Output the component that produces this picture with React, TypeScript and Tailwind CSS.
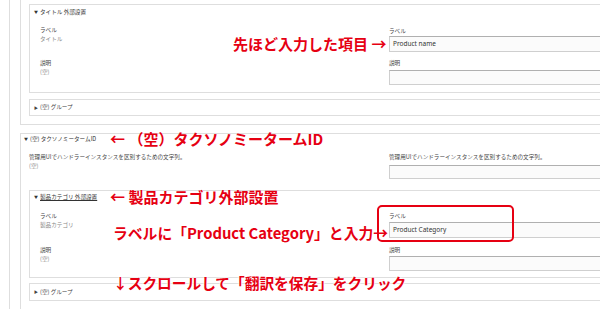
import React from "react";

const small = "text-[5.6px] leading-[9px]";
const annot =
  "absolute whitespace-nowrap font-bold leading-[15px] text-[#e60012] font-['Noto_Sans_CJK_JP',sans-serif]";

function Input({ h, value }: { h: string; value?: string }) {
  return (
    <div
      className={`${h} w-[320px] border border-[#cfcfcf] border-t-[#b0b0b0] bg-[#fbfbfb] flex items-center pl-[3px] text-[6.5px] text-[#333] font-['Noto_Sans',sans-serif]`}
    >
      {value}
    </div>
  );
}

export default function App() {
  return (
    <div className="relative w-[600px] h-[309px] overflow-hidden bg-white text-[#444] font-['Noto_Sans_CJK_JP','Noto_Sans',sans-serif]">
      <div className="ml-[9px] h-full border-l border-[#dedede] pl-[10px]">
        {/* Fieldset 1 */}
        <div className="w-[720px] border-l border-b border-r border-[#dedede] pl-[8px] pt-[4px] pb-[8px]">
          <div className="h-[89px] border border-[#dedede] pt-0">
            <div className={`h-[14px] leading-[14px] pl-[4px] text-[5.6px] text-[#333] flex items-center gap-[2px]`}>
              <span className="text-[4px]">▼</span>
              <span>タイトル 外部設置</span>
            </div>
            <div className="flex h-[33px]">
              <div className="w-[359px] pl-[10px] pt-[7px]">
                <div className={`${small} text-[#444]`}>ラベル</div>
                <div className={`${small} text-[#888]`}>タイトル</div>
              </div>
              <div className="pt-[8px]">
                <div className={`h-[9px] ${small} text-[#444]`}>ラベル</div>
                <Input h="h-[16px]" value="Product name" />
              </div>
            </div>
            <div className="flex h-[33px]">
              <div className="w-[359px] pl-[10px] pt-[7px]">
                <div className={`${small} text-[#444]`}>説明</div>
                <div className={`${small} text-[#888]`}>(空)</div>
              </div>
              <div className="pt-[7px]">
                <div className={`h-[11px] ${small} text-[#444]`}>説明</div>
                <Input h="h-[15px]" />
              </div>
            </div>
          </div>
          <div className="mt-[6px] h-[17px] border border-[#dedede] pl-[4px] flex items-center gap-[2px] text-[5.6px] text-[#444]">
            <span className="text-[4px]">▶</span>
            <span>(空) グループ</span>
          </div>
        </div>

        {/* Fieldset 2 */}
        <div className="mt-[8px] w-[720px] h-[200px] border-l border-t border-r border-[#dedede]">
          <div className="h-[10px] pl-[3px] flex items-center gap-[2px] text-[5.6px] text-[#333]">
            <span className="text-[4px]">▼</span>
            <span>(空) タクソノミータームID</span>
          </div>
          <div className="pl-[8px]">
            <div className="flex h-[35px]">
              <div className="w-[360px] pt-[9px]">
                <div className={`${small} text-[#444]`}>
                  管理用UIでハンドラーインスタンスを区別するための文字列。
                </div>
                <div className={`${small} text-[#888]`}>(空)</div>
              </div>
              <div className="pt-[9px]">
                <div className={`h-[12px] ${small} text-[#444]`}>
                  管理用UIでハンドラーインスタンスを区別するための文字列。
                </div>
                <Input h="h-[14px]" />
              </div>
            </div>
            <div className="mt-[11px] h-[88px] border border-[#dedede]">
              <div className="h-[12px] pl-[4px] flex items-center gap-[2px] text-[5.6px] text-[#333]">
                <span className="text-[4px]">▼</span>
                <span className="underline">製品カテゴリ 外部設置</span>
              </div>
              <div className="flex h-[35px]">
                <div className="w-[359px] pl-[10px] pt-[9px]">
                  <div className={`${small} text-[#444]`}>ラベル</div>
                  <div className={`${small} text-[#888]`}>製品カテゴリ</div>
                </div>
                <div className="pt-[9px]">
                  <div className={`h-[10px] ${small} text-[#444]`}>ラベル</div>
                  <Input h="h-[16px]" value="Product Category" />
                </div>
              </div>
              <div className="flex h-[33px]">
                <div className="w-[359px] pl-[10px] pt-[8px]">
                  <div className={`${small} text-[#444]`}>説明</div>
                  <div className={`${small} text-[#888]`}>(空)</div>
                </div>
                <div className="pt-[8px]">
                  <div className={`h-[10px] ${small} text-[#444]`}>説明</div>
                  <Input h="h-[15px]" />
                </div>
              </div>
            </div>
            <div className="mt-[5px] h-[18px] border border-[#dedede] pl-[4px] flex items-center gap-[2px] text-[5.6px] text-[#444]">
              <span className="text-[4px]">▶</span>
              <span>(空) グループ</span>
            </div>
          </div>
        </div>
      </div>

      {/* Annotations */}
      <span className={`${annot} text-[15px]`} style={{ left: 233, top: 36 }}>
        先ほど入力した項目 →
      </span>
      <span className={`${annot} text-[15px]`} style={{ left: 110, top: 131 }}>
        ← （空）タクソノミータームID
      </span>
      <span className={`${annot} text-[15px]`} style={{ left: 110, top: 189 }}>
        ← 製品カテゴリ外部設置
      </span>
      <span className={`${annot} text-[14.8px]`} style={{ left: 113, top: 225 }}>
        ラベルに「Product Category」と入力→
      </span>
      <span
        className={`${annot} text-[14.7px] [text-shadow:0_0_2px_#fff,0_0_2px_#fff,0_0_3px_#fff]`}
        style={{ left: 113, top: 275 }}
      >
        ↓スクロールして「翻訳を保存」をクリック
      </span>
      <div className="absolute left-[377px] top-[205px] w-[137px] h-[37px] border-2 border-[#e60012] rounded-[5px]" />
    </div>
  );
}
